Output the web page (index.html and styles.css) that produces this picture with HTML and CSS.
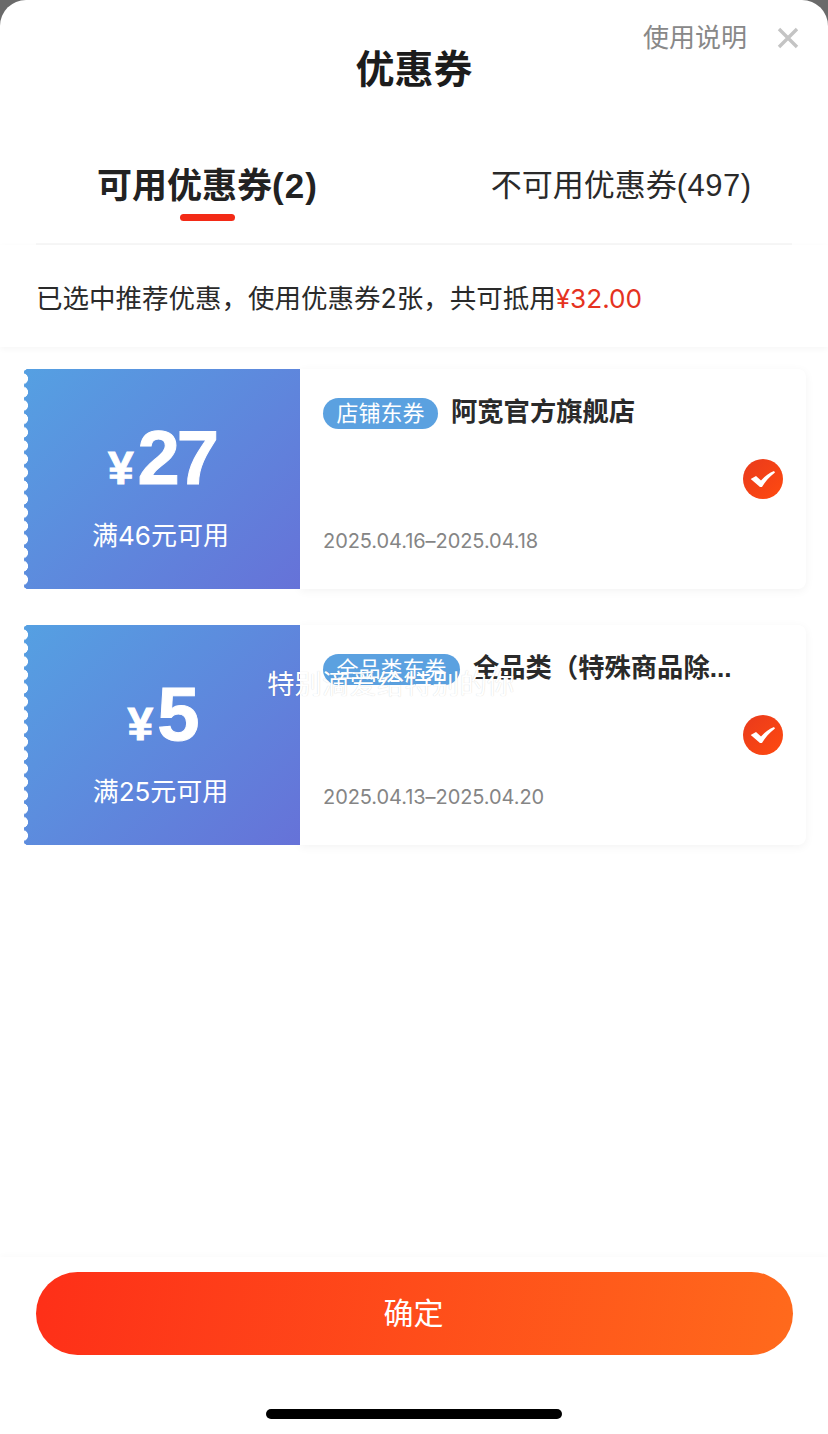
FILE: index.html
```html
<!DOCTYPE html>
<html lang="zh-CN">
<head>
<meta charset="utf-8">
<title>优惠券</title>
<link rel="stylesheet" href="styles.css">
</head>
<body>
<div class="sheet">
  <header class="head">
    <span></span>
    <h1 class="title">优惠券</h1>
    <div class="actions">
      <span class="help">使用说明</span>
      <svg class="close" viewBox="0 0 22 22" width="22" height="22"><path d="M2 2L20 20M20 2L2 20" stroke="#c4c4c4" stroke-width="3.4" fill="none"/></svg>
    </div>
  </header>
  <nav class="tabs">
    <div class="tab tab-on">可用优惠券<span class="count-on">(2)</span><i class="bar"></i></div>
    <div class="tab tab-off">不可用优惠券<span class="count-off">(497)</span></div>
  </nav>
  <p class="info">已选中推荐优惠，使用优惠券2张，共可抵用<span class="red">¥32.00</span></p>
  <main class="list">
    <article class="coupon">
      <div class="ticket">
        <div class="amount"><span class="yen">¥</span><span class="num">27</span></div>
        <div class="cond">满46元可用</div>
      </div>
      <div class="detail">
        <div class="body">
          <div class="top"><span class="tag">店铺东券</span><span class="name">阿宽官方旗舰店</span></div>
          <div class="date">2025.04.16–2025.04.18</div>
        </div>
        <svg class="check" viewBox="0 0 40 40" width="40" height="40"><defs><linearGradient id="c1" x1="0" y1="0" x2="1" y2="1"><stop offset="0" stop-color="#e93a1c"/><stop offset="1" stop-color="#ff4a10"/></linearGradient></defs><circle cx="20" cy="20" r="20" fill="url(#c1)"/><path d="M7.7 20L13 17L18 21.5C22 17 26 14 31 12L32 13.5C26 18 22 23 19 28L17 28Z" fill="#fff"/></svg>
      </div>
    </article>
    <article class="coupon">
      <div class="ticket">
        <div class="amount"><span class="yen">¥</span><span class="num">5</span></div>
        <div class="cond">满25元可用</div>
      </div>
      <div class="detail">
        <div class="body">
          <div class="top"><span class="tag">全品类东券</span><span class="name">全品类（特殊商品除...</span></div>
          <div class="date">2025.04.13–2025.04.20</div>
        </div>
        <svg class="check" viewBox="0 0 40 40" width="40" height="40"><defs><linearGradient id="c2" x1="0" y1="0" x2="1" y2="1"><stop offset="0" stop-color="#e93a1c"/><stop offset="1" stop-color="#ff4a10"/></linearGradient></defs><circle cx="20" cy="20" r="20" fill="url(#c2)"/><path d="M7.7 20L13 17L18 21.5C22 17 26 14 31 12L32 13.5C26 18 22 23 19 28L17 28Z" fill="#fff"/></svg>
      </div>
    </article>
  </main>
  <footer class="foot">
    <button class="confirm">确定</button>
    <div class="home"></div>
  </footer>
  <div class="toast">特别滴爱给特别的你</div>
</div>
</body>
</html>
```
FILE: styles.css
```css
* { box-sizing: border-box; }
html, body { margin: 0; padding: 0; }
body {
  width: 828px;
  height: 1434px;
  background: #6a6a6a;
  font-family: Inter, "Noto Sans CJK SC", sans-serif;
  color: #222;
  overflow: hidden;
}
.sheet {
  position: relative;
  height: 1434px;
  background: #fff;
  border-radius: 26px 26px 0 0;
  display: flex;
  flex-direction: column;
  overflow: hidden;
}
.head {
  display: grid;
  grid-template-columns: 1fr auto 1fr;
  height: 140px;
}
.title {
  margin: 42px 0 0;
  font-size: 39px;
  line-height: 54px;
  font-weight: 700;
  color: #1c1c1c;
}
.actions {
  display: flex;
  justify-content: flex-end;
  align-items: center;
  gap: 30px;
  height: 40px;
  margin-top: 18px;
  padding-right: 29px;
}
.help { font-size: 26px; line-height: 40px; color: #888; }
.tabs {
  display: flex;
  height: 105px;
  margin: 0 36px;
  border-bottom: 2px solid #f7f7f7;
  font-family: "Liberation Sans", "Noto Sans CJK SC", sans-serif;
}
.tab { position: relative; white-space: nowrap; height: 92px; }
.tab-on {
  margin-left: 61px;
  font-size: 35px;
  line-height: 92px;
  font-weight: 700;
}
.tab-off {
  margin-left: 173px;
  font-size: 31px;
  line-height: 92px;
  color: #2a2a2a;
}
.count-on { letter-spacing: 1px; }
.count-off { letter-spacing: .5px; }
.bar {
  position: absolute;
  left: 83px;
  top: 74px;
  width: 55px;
  height: 7px;
  border-radius: 4px;
  background: #f32a16;
}
.info {
  margin: 0;
  height: 102px;
  padding: 0 36px;
  font-size: 26.5px;
  line-height: 106px;
  color: #2a2a2a;
  white-space: nowrap;
  box-shadow: 0 2px 6px rgba(0,0,0,.04);
  position: relative;
}
.red { color: #e5331f; font-size: 26.2px; }
.list {
  flex: 1;
  padding: 22px 22px 0 24px;
  display: flex;
  flex-direction: column;
  gap: 36px;
}
.coupon { display: flex; height: 220px; }
.ticket {
  position: relative;
  flex: none;
  width: 276px;
  background: linear-gradient(135deg, #55a0e2 0%, #6672d8 100%);
  border-radius: 3px 0 0 3px;
  color: #fff;
  text-align: center;
}
.ticket::before {
  content: "";
  position: absolute;
  left: 0;
  top: 0;
  bottom: 0;
  width: 5px;
  background: radial-gradient(circle at -1.5px 50%, #fff 5.2px, transparent 5.8px) 0 3px / 5px 13.4px repeat-y;
}
.amount {
  height: 118px;
  padding-top: 44px;
  display: flex;
  justify-content: center;
  align-items: baseline;
  font-family: "Liberation Sans", sans-serif;
  font-weight: 700;
  line-height: 90px;
}
.yen { font-size: 46px; margin-right: 4px; -webkit-text-stroke: 1px #fff; }
.num { font-size: 76px; letter-spacing: -3px; -webkit-text-stroke: 1px #fff; }
.cond { margin-top: 29px; padding-right: 3px; font-size: 26px; line-height: 40px; }
.detail {
  flex: 1;
  display: flex;
  align-items: center;
  padding: 0 23px 0 23px;
  background: #fff;
  border-radius: 0 8px 8px 0;
  box-shadow: 0 2px 10px rgba(0,0,0,.05);
}
.body {
  flex: 1;
  height: 100%;
  min-width: 0;
  display: flex;
  flex-direction: column;
  justify-content: space-between;
  padding: 27px 0 33px;
}
.top { display: flex; align-items: center; height: 33px; white-space: nowrap; }
.tag {
  height: 31px;
  margin-top: 2px;
  padding: 0 13.5px;
  border-radius: 16px;
  background: #5ba1e0;
  color: #fff;
  font-size: 22px;
  line-height: 31px;
  margin-right: 13px;
}
.name {
  font-family: "Liberation Sans", "Noto Sans CJK SC", sans-serif;
  font-size: 26.3px;
  line-height: 33px;
  font-weight: 700;
  color: #2a2a2a;
}
.date { font-size: 20px; line-height: 30px; letter-spacing: -.07px; color: #858585; white-space: nowrap; }
.check { flex: none; }
.foot {
  height: 177px;
  padding: 15px 35px 0 36px;
  box-shadow: 0 -2px 6px rgba(0,0,0,.02);
  display: flex;
  flex-direction: column;
  align-items: center;
}
.confirm {
  width: 757px;
  height: 83px;
  border: 0;
  padding: 0 2px 4px 0;
  border-radius: 42px;
  background: linear-gradient(100deg, #fe2f18 0%, #ff6a1c 100%);
  color: #fff;
  font: 400 30px/79px "Noto Sans CJK SC", sans-serif;
}
.home {
  width: 296px;
  height: 10px;
  margin-top: 54px;
  margin-right: 2px;
  border-radius: 5px;
  background: #000;
}
.toast {
  position: absolute;
  left: 267px;
  top: 664px;
  font-size: 27.5px;
  line-height: 40px;
  color: #fff;
  white-space: nowrap;
  text-shadow: 0 0 1px rgba(0,0,0,.18);
}
```
